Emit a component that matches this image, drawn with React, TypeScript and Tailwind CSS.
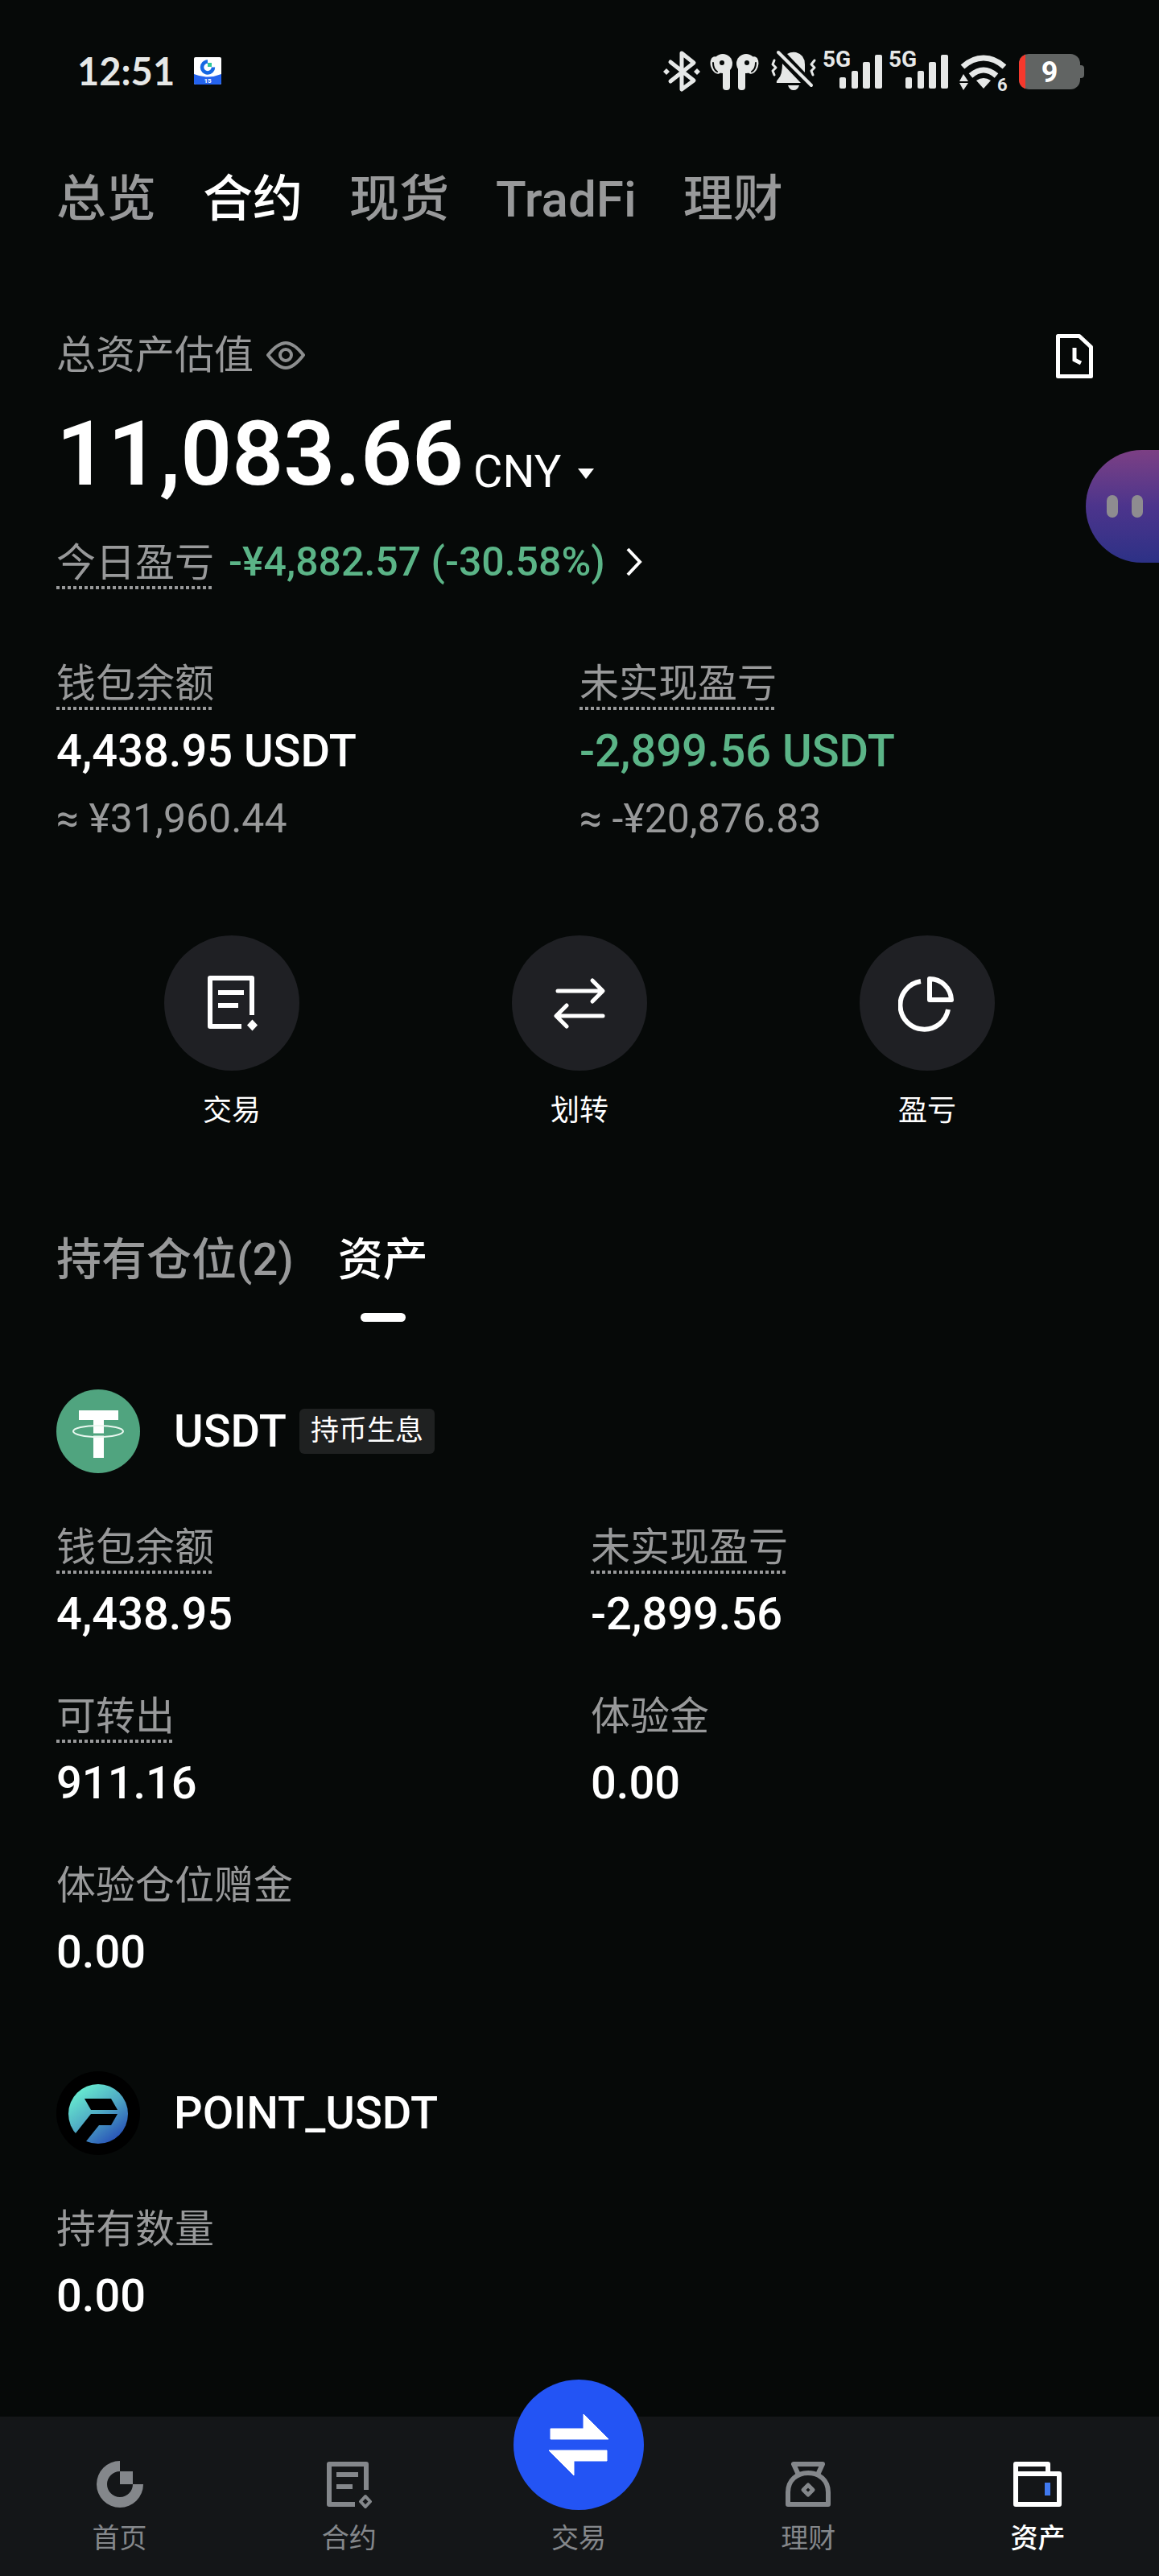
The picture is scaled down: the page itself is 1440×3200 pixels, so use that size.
import { useState } from 'react';
import { clsx } from 'clsx';

const accountTabs = ['总览', '合约', '现货', 'TradFi', '理财'];

const holdingTabs = ['持有仓位(2)', '资产'];

const usdtStats = [
  { label: '钱包余额', value: '4,438.95', hint: true },
  { label: '未实现盈亏', value: '-2,899.56', hint: true },
  { label: '可转出', value: '911.16', hint: true },
  { label: '体验金', value: '0.00', hint: false },
  { label: '体验仓位赠金', value: '0.00', hint: false },
];

const pointStats = [{ label: '持有数量', value: '0.00', hint: false }];

const actions = [
  { name: '交易', icon: OrderIcon },
  { name: '划转', icon: TransferIcon },
  { name: '盈亏', icon: PieIcon },
];

const navigation = [
  { name: '首页', href: '#home', icon: HomeIcon },
  { name: '合约', href: '#futures', icon: ContractIcon },
  { name: '交易', href: '#trade', icon: null },
  { name: '理财', href: '#earn', icon: EarnIcon },
  { name: '资产', href: '#assets', icon: WalletIcon },
];

/* ---------- Status bar ---------- */

function AppBadge() {
  return (
    <svg width="34" height="34" viewBox="0 0 34 34" aria-hidden="true">
      <rect width="34" height="34" rx="2" fill="#fff" />
      <path d="M0 21 Q17 28 34 21 V32 a2 2 0 0 1 -2 2 H2 a2 2 0 0 1 -2 -2Z" fill="#2463ee" />
      <path d="M17 5.500 A7 7 0 1 0 24 12.500" fill="none" stroke="#1668e3" strokeWidth="4.500" />
      <rect x="17" y="7" width="5" height="5" fill="#2fc79a" />
      <text x="17" y="32" fill="#fff" fontSize="8" fontWeight="700" textAnchor="middle">15</text>
    </svg>
  );
}

function BluetoothIcon() {
  return (
    <svg width="50" height="56" viewBox="0 0 50 56" fill="none" aria-hidden="true">
      <path d="M9 17 L38 40 L23 51 V6 L38 18 L9 41" stroke="#e6e8e7" strokeWidth="5" strokeLinecap="round" strokeLinejoin="round" />
      <path d="M4 25 l4 4 -4 4 -4 -4Z M42 25 l4 4 -4 4 -4 -4Z" fill="#e6e8e7" />
    </svg>
  );
}

function EarbudsIcon() {
  return (
    <svg width="66" height="56" viewBox="0 0 66 56" fill="#e6e8e7" aria-hidden="true">
      <ellipse cx="10" cy="21" rx="7" ry="11" transform="rotate(-18 10 21)" />
      <ellipse cx="55" cy="21" rx="7" ry="11" transform="rotate(18 55 21)" />
      <circle cx="18" cy="19" r="12" />
      <circle cx="47" cy="19" r="12" />
      <rect x="18" y="19" width="9" height="33" rx="4" />
      <rect x="37" y="19" width="9" height="33" rx="4" />
      <g fill="none" stroke="#060908" strokeWidth="2" strokeLinecap="round">
        <path d="M6 18 Q6 26 11 29" />
        <path d="M59 18 Q59 26 54 29" />
      </g>
      <circle cx="17" cy="18" r="3" fill="#060908" />
      <circle cx="48" cy="18" r="3" fill="#060908" />
    </svg>
  );
}

function MutedBellIcon() {
  return (
    <svg width="64" height="56" viewBox="0 0 64 56" aria-hidden="true">
      <g fill="#e6e8e7">
        <path d="M26 7 Q31 4 37 5 Q48 8 48 20 V30Z" />
        <path d="M20 19 L43 43 H13 Q12 41 15 38 Q20 33 20 19Z" />
        <path d="M27 46 H41 Q39 52 34 52 Q29 52 27 46Z" />
      </g>
      <g fill="none" stroke="#e6e8e7" strokeWidth="4" strokeLinecap="round" strokeLinejoin="round">
        <path d="M15 5 L56 46" />
        <path d="M10 15 L8 20 L12 24 L8 28 L10 33" strokeWidth="3" />
        <path d="M60 15 L56 20 L60 24 L56 28 L58 33" strokeWidth="3" />
      </g>
    </svg>
  );
}

function SignalIcon() {
  return (
    <svg width="76" height="72" viewBox="0 -8 76 72" fill="#e6e8e7" aria-hidden="true">
      <text x="0" y="23" fontSize="28" fontWeight="700">5G</text>
      <rect x="21" y="36" width="8" height="14" rx="2" />
      <rect x="36" y="28" width="8" height="22" rx="2" />
      <rect x="50" y="17" width="9" height="33" rx="2" />
      <rect x="65" y="8" width="9" height="42" rx="2" />
    </svg>
  );
}

function WifiIcon() {
  return (
    <svg width="68" height="72" viewBox="0 -8 68 72" fill="#e6e8e7" aria-hidden="true">
      <g fill="none" stroke="#e6e8e7" strokeWidth="7">
        <path d="M10 23 Q22 12 36 12 T62 23" />
        <path d="M20 34 Q28 27 36 27 T52 34" />
      </g>
      <path d="M27 40 Q36 34 45 40 L36 50Z" />
      <path d="M11 32 L17 41 H6Z M6 43 H17 L11 52Z" />
      <text x="53" y="53" fontSize="22" fontWeight="700">6</text>
    </svg>
  );
}

function BatteryIcon() {
  return (
    <svg width="90" height="56" viewBox="0 0 90 56" role="img" aria-label="电量 9%">
      <clipPath id="battery-body">
        <rect x="6" y="7" width="76" height="44" rx="12" />
      </clipPath>
      <rect x="78" y="21" width="9" height="16" rx="4" fill="#616463" />
      <g clipPath="url(#battery-body)">
        <rect x="6" y="7" width="76" height="44" fill="#616463" />
        <rect x="6" y="7" width="8" height="44" fill="#f5382c" />
      </g>
      <text x="44" y="42" fill="#fff" fontSize="36" fontWeight="700" textAnchor="middle">9</text>
    </svg>
  );
}

/* ---------- Page icons ---------- */

function EyeIcon() {
  return (
    <svg width="48" height="36" viewBox="0 0 48 36" fill="none" stroke="#8c8e8f" strokeWidth="4" aria-hidden="true">
      <path d="M2 17 Q14 2 24 2 T46 17 Q34 33 24 33 T2 17Z" strokeLinejoin="round" />
      <circle cx="24" cy="17" r="7" />
    </svg>
  );
}

function HistoryIcon() {
  return (
    <svg width="72" height="60" viewBox="0 0 72 60" fill="none" stroke="#fff" strokeWidth="5" aria-hidden="true">
      <path d="M16.500 5.500 H43 L57.500 19 V55.500 H16.500Z" strokeLinejoin="round" />
      <path d="M37 20 V35 L45 39" />
    </svg>
  );
}

function OrderIcon() {
  return (
    <svg width="72" height="72" viewBox="0 0 72 72" fill="none" stroke="#fff" strokeWidth="6" aria-hidden="true">
      <path d="M61 51 V5 H9 V65 H48" strokeLinejoin="round" />
      <path d="M19 23 H51 M19 39 H44" />
      <path d="M61.500 56.500 l6.500 7 -6.500 7 -6.500 -7Z" fill="#fff" stroke="none" />
    </svg>
  );
}

function TransferIcon() {
  return (
    <svg width="72" height="72" viewBox="0 0 72 72" fill="none" stroke="#fff" strokeWidth="5" strokeLinecap="round" strokeLinejoin="round" aria-hidden="true">
      <path d="M9 21 H64 M52 8 L65 21 L52 34" />
      <path d="M65 52 H8 M20 39 L7 52 L20 65" />
    </svg>
  );
}

function PieIcon() {
  return (
    <svg width="72" height="72" viewBox="0 0 72 72" fill="none" stroke="#fff" strokeWidth="6" aria-hidden="true">
      <path d="M28 9 A30 30 0 1 0 62 44" />
      <path d="M39 6 A27 27 0 0 1 66 32 H39Z" strokeLinejoin="round" />
    </svg>
  );
}

function UsdtLogo() {
  return (
    <svg width="104" height="104" viewBox="0 0 104 104" aria-hidden="true">
      <circle cx="52" cy="52" r="52" fill="#50a47f" />
      <path d="M28 26 H77 V38 H59 V85 H46 V38 H28Z" fill="#fff" />
      <path d="M46 56 H59" stroke="#50a47f" strokeWidth="3" />
      <ellipse cx="52" cy="52" rx="31" ry="7" fill="none" stroke="#e9f7ef" strokeWidth="2" />
    </svg>
  );
}

function PointLogo() {
  return (
    <svg width="104" height="104" viewBox="0 0 104 104" aria-hidden="true">
      <defs>
        <linearGradient id="point-fill" x1="0.200" y1="0.100" x2="0.800" y2="0.900">
          <stop offset="0" stopColor="#66e8cf" />
          <stop offset="0.500" stopColor="#4fa9c4" />
          <stop offset="1" stopColor="#2a57b8" />
        </linearGradient>
      </defs>
      <circle cx="52" cy="52" r="52" fill="#000" />
      <circle cx="52" cy="53" r="37" fill="url(#point-fill)" />
      <path d="M35 34 H68 L76 48 H43Z" fill="#000" />
      <path d="M43 53 H76 L68 67 H53 L37 87 L30 92 L20 82Z" fill="#000" />
    </svg>
  );
}

/* ---------- Bottom navigation icons ---------- */

function HomeIcon() {
  return (
    <svg width="60" height="60" viewBox="0 0 60 60" fill="currentColor" aria-hidden="true">
      <path d="M30 1 A29 29 0 1 0 59 30 H46 A16 16 0 1 1 30 14Z" />
      <rect x="30" y="14" width="16" height="16" />
    </svg>
  );
}

function ContractIcon() {
  return (
    <svg width="60" height="60" viewBox="0 0 60 60" fill="none" stroke="currentColor" strokeWidth="6" aria-hidden="true">
      <path d="M51 37 V5 H5 V55 H37" strokeLinejoin="round" />
      <path d="M14 18 H41 M14 33 H34" />
      <path d="M50 45 l6 6.500 -6 6.500 -6 -6.500Z" strokeWidth="4" strokeLinejoin="round" />
    </svg>
  );
}

function EarnIcon() {
  return (
    <svg width="60" height="60" viewBox="0 0 60 60" fill="none" stroke="currentColor" strokeWidth="6" strokeLinejoin="round" aria-hidden="true">
      <path d="M18 18 L12 5 H48 L42 18" />
      <path d="M5 55 V40 C5 25 16 16 30 16 S55 25 55 40 V55Z" />
      <path d="M30 31 l6 6 -6 6 -6 -6Z" strokeWidth="5" />
    </svg>
  );
}

function WalletIcon() {
  return (
    <svg width="60" height="60" viewBox="0 0 60 60" fill="none" stroke="currentColor" strokeWidth="6" strokeLinejoin="round" aria-hidden="true">
      <path d="M3 17 V5 H43 V17" />
      <path d="M3 17 H57 V55 H3Z" />
      <rect x="39" y="28" width="7" height="16" fill="#4079f0" stroke="none" />
    </svg>
  );
}

function TradeIcon() {
  return (
    <svg viewBox="0 0 162 162" fill="#fff" stroke="#fff" strokeLinejoin="round" className="size-full" aria-hidden="true">
      <path d="M46 61 H87 V43 L118 74 H46Z" />
      <path d="M116 88 V101 H75 V119 L44 88Z" />
    </svg>
  );
}

/* ---------- Building blocks ---------- */

function StatLabel({ text, hint }: { text: string; hint: boolean }) {
  return (
    <dt
      className={clsx(
        'w-fit pb-1 text-[49px] leading-[56px] text-[#98999a]',
        hint &&
          'bg-[repeating-linear-gradient(to_right,#98999a_0px_4px,transparent_4px_7px)] bg-[length:100%_4px] bg-bottom bg-no-repeat'
      )}
    >
      {text}
    </dt>
  );
}

interface Stat {
  label: string;
  value: string;
  hint: boolean;
}

function StatGrid({ stats }: { stats: Stat[] }) {
  return (
    <dl className="mt-[65px] grid grid-cols-2 gap-x-7 gap-y-[70px]">
      {stats.map((stat) => (
        <div key={stat.label}>
          <StatLabel text={stat.label} hint={stat.hint} />
          <dd className="mt-5 text-[56px] leading-[60px] font-medium">{stat.value}</dd>
        </div>
      ))}
    </dl>
  );
}

function StatusBar() {
  return (
    <div className="flex h-44 items-center justify-between pr-[90px] pl-24 text-[#e6e8e7]">
      <div className="flex items-center gap-6">
        <span className="font-['Lato'] text-[47px] leading-[56px] font-bold">12:51</span>
        <AppBadge />
      </div>
      <div className="flex items-center gap-1.5">
        <BluetoothIcon />
        <EarbudsIcon />
        <MutedBellIcon />
        <SignalIcon />
        <SignalIcon />
        <WifiIcon />
        <BatteryIcon />
      </div>
    </div>
  );
}

function BottomNav() {
  return (
    <nav className="mt-auto flex bg-[#141618] pr-2 pl-1.5 pb-[25px]">
      {navigation.map((item) => {
        const isActive = item.href === '#assets';

        return (
          <a
            key={item.href}
            href={item.href}
            className={clsx(
              'relative flex flex-1 flex-col items-center pt-[54px] text-[34px] leading-[44px]',
              isActive ? 'font-medium text-white' : 'text-[#84878b]'
            )}
          >
            {item.icon ? (
              <item.icon />
            ) : (
              <>
                <span className="absolute -top-[46px] size-[162px] rounded-full bg-[#2354f4]">
                  <TradeIcon />
                </span>
                <span className="h-[60px]" />
              </>
            )}
            <span className="mt-[15px]">{item.name}</span>
          </a>
        );
      })}
    </nav>
  );
}

export default function App() {
  const [account, setAccount] = useState('合约');
  const [holding, setHolding] = useState('资产');

  return (
    <div className="relative flex min-h-screen flex-col bg-[#060908] font-['Roboto','Noto_Sans_CJK_SC',sans-serif] text-white">
      <StatusBar />

      <main className="flex flex-col px-[70px] pt-9 pb-[120px]">
        {/* Account tabs */}
        <div className="flex gap-[58px]">
          {accountTabs.map((tab) => (
            <button
              key={tab}
              type="button"
              onClick={() => setAccount(tab)}
              className={clsx(
                'text-[62px] leading-[72px] font-medium whitespace-nowrap',
                tab === account ? 'text-white' : 'text-[#98999a]'
              )}
            >
              {tab}
            </button>
          ))}
        </div>

        {/* Total value */}
        <div className="mt-32 flex items-center justify-between">
          <div className="flex items-center gap-4">
            <h1 className="text-[49px] leading-[60px] text-[#98999a]">总资产估值</h1>
            <button type="button" aria-label="隐藏金额">
              <EyeIcon />
            </button>
          </div>
          <button type="button" aria-label="历史记录">
            <HistoryIcon />
          </button>
        </div>

        <div className="mt-8 flex items-end gap-3">
          <span className="text-[112px] leading-[120px] font-semibold">11,083.66</span>
          <div className="mb-2 flex items-center gap-[18px]">
            <select aria-label="计价货币" className="appearance-none bg-transparent text-[56px] leading-[60px]">
              <option>CNY</option>
            </select>
            <svg width="24" height="24" viewBox="0 0 24 24" className="pointer-events-none" aria-hidden="true">
              <path d="M2 8 H22 L12 21Z" fill="#fff" />
            </svg>
          </div>
        </div>

        <dl className="mt-12 flex items-start gap-[18px]">
          <StatLabel text="今日盈亏" hint />
          <dd>
            <a href="#pnl" className="flex items-center gap-6 text-[50px] leading-[52px] font-medium text-[#5bb487]">
              -¥4,882.57 (-30.58%)
              <svg width="24" height="36" viewBox="0 0 24 36" fill="none" stroke="#fff" strokeWidth="4" aria-hidden="true">
                <path d="M4 2 L19 18 L4 34" />
              </svg>
            </a>
          </dd>
        </dl>

        <dl className="mt-[90px] grid grid-cols-2">
          <div>
            <StatLabel text="钱包余额" hint />
            <dd className="mt-[21px] text-[56px] leading-[60px] font-medium">4,438.95 USDT</dd>
            <dd className="mt-[26px] text-[50px] leading-[56px] text-[#98999a]">≈ ¥31,960.44</dd>
          </div>
          <div>
            <StatLabel text="未实现盈亏" hint />
            <dd className="mt-[21px] text-[56px] leading-[60px] font-medium text-[#5bb487]">-2,899.56 USDT</dd>
            <dd className="mt-[26px] text-[50px] leading-[56px] text-[#98999a]">≈ -¥20,876.83</dd>
          </div>
        </dl>

        {/* Quick actions */}
        <div className="mt-[117px] grid grid-cols-3 px-0.5">
          {actions.map((action) => (
            <button key={action.name} type="button" className="flex flex-col items-center">
              <span className="flex size-[168px] items-center justify-center rounded-full bg-[#1f2024]">
                <action.icon />
              </span>
              <span className="mt-7 text-[36px] leading-[44px]">{action.name}</span>
            </button>
          ))}
        </div>

        {/* Holdings */}
        <div className="mt-[129px] flex gap-[55px]">
          {holdingTabs.map((tab) => (
            <button
              key={tab}
              type="button"
              onClick={() => setHolding(tab)}
              className={clsx(
                'flex flex-col items-center text-[56px] leading-[68px] font-medium',
                tab === holding ? 'text-white' : 'text-[#98999a]'
              )}
            >
              {tab}
              <span className={clsx('mt-8 h-[11px] w-14 rounded-full', tab === holding && 'bg-white')} />
            </button>
          ))}
        </div>

        <section className="mt-[84px]">
          <div className="flex items-center">
            <UsdtLogo />
            <h2 className="ml-[42px] text-[56px] leading-[60px] font-medium">USDT</h2>
            <span className="ml-4 rounded-md bg-[#1f2121] px-3.5 text-[35px] leading-[56px]">持币生息</span>
          </div>
          <StatGrid stats={usdtStats} />
        </section>

        <section className="mt-[118px]">
          <div className="flex items-center">
            <PointLogo />
            <h2 className="ml-[42px] text-[56px] leading-[60px] font-medium">POINT_USDT</h2>
          </div>
          <StatGrid stats={pointStats} />
        </section>
      </main>

      <BottomNav />

      {/* Floating assistant */}
      <button
        type="button"
        aria-label="智能助手"
        className="absolute top-[559px] right-0 flex h-[140px] w-[91px] items-center gap-[17px] rounded-l-[70px] bg-linear-to-b from-[#7c3f84] via-[#4c348c] to-[#2c3186] pl-[26px]"
      >
        <span className="h-7 w-3.5 rounded-full bg-[#8e8c90]" />
        <span className="h-7 w-3.5 rounded-full bg-[#8e8c90]" />
      </button>
    </div>
  );
}
